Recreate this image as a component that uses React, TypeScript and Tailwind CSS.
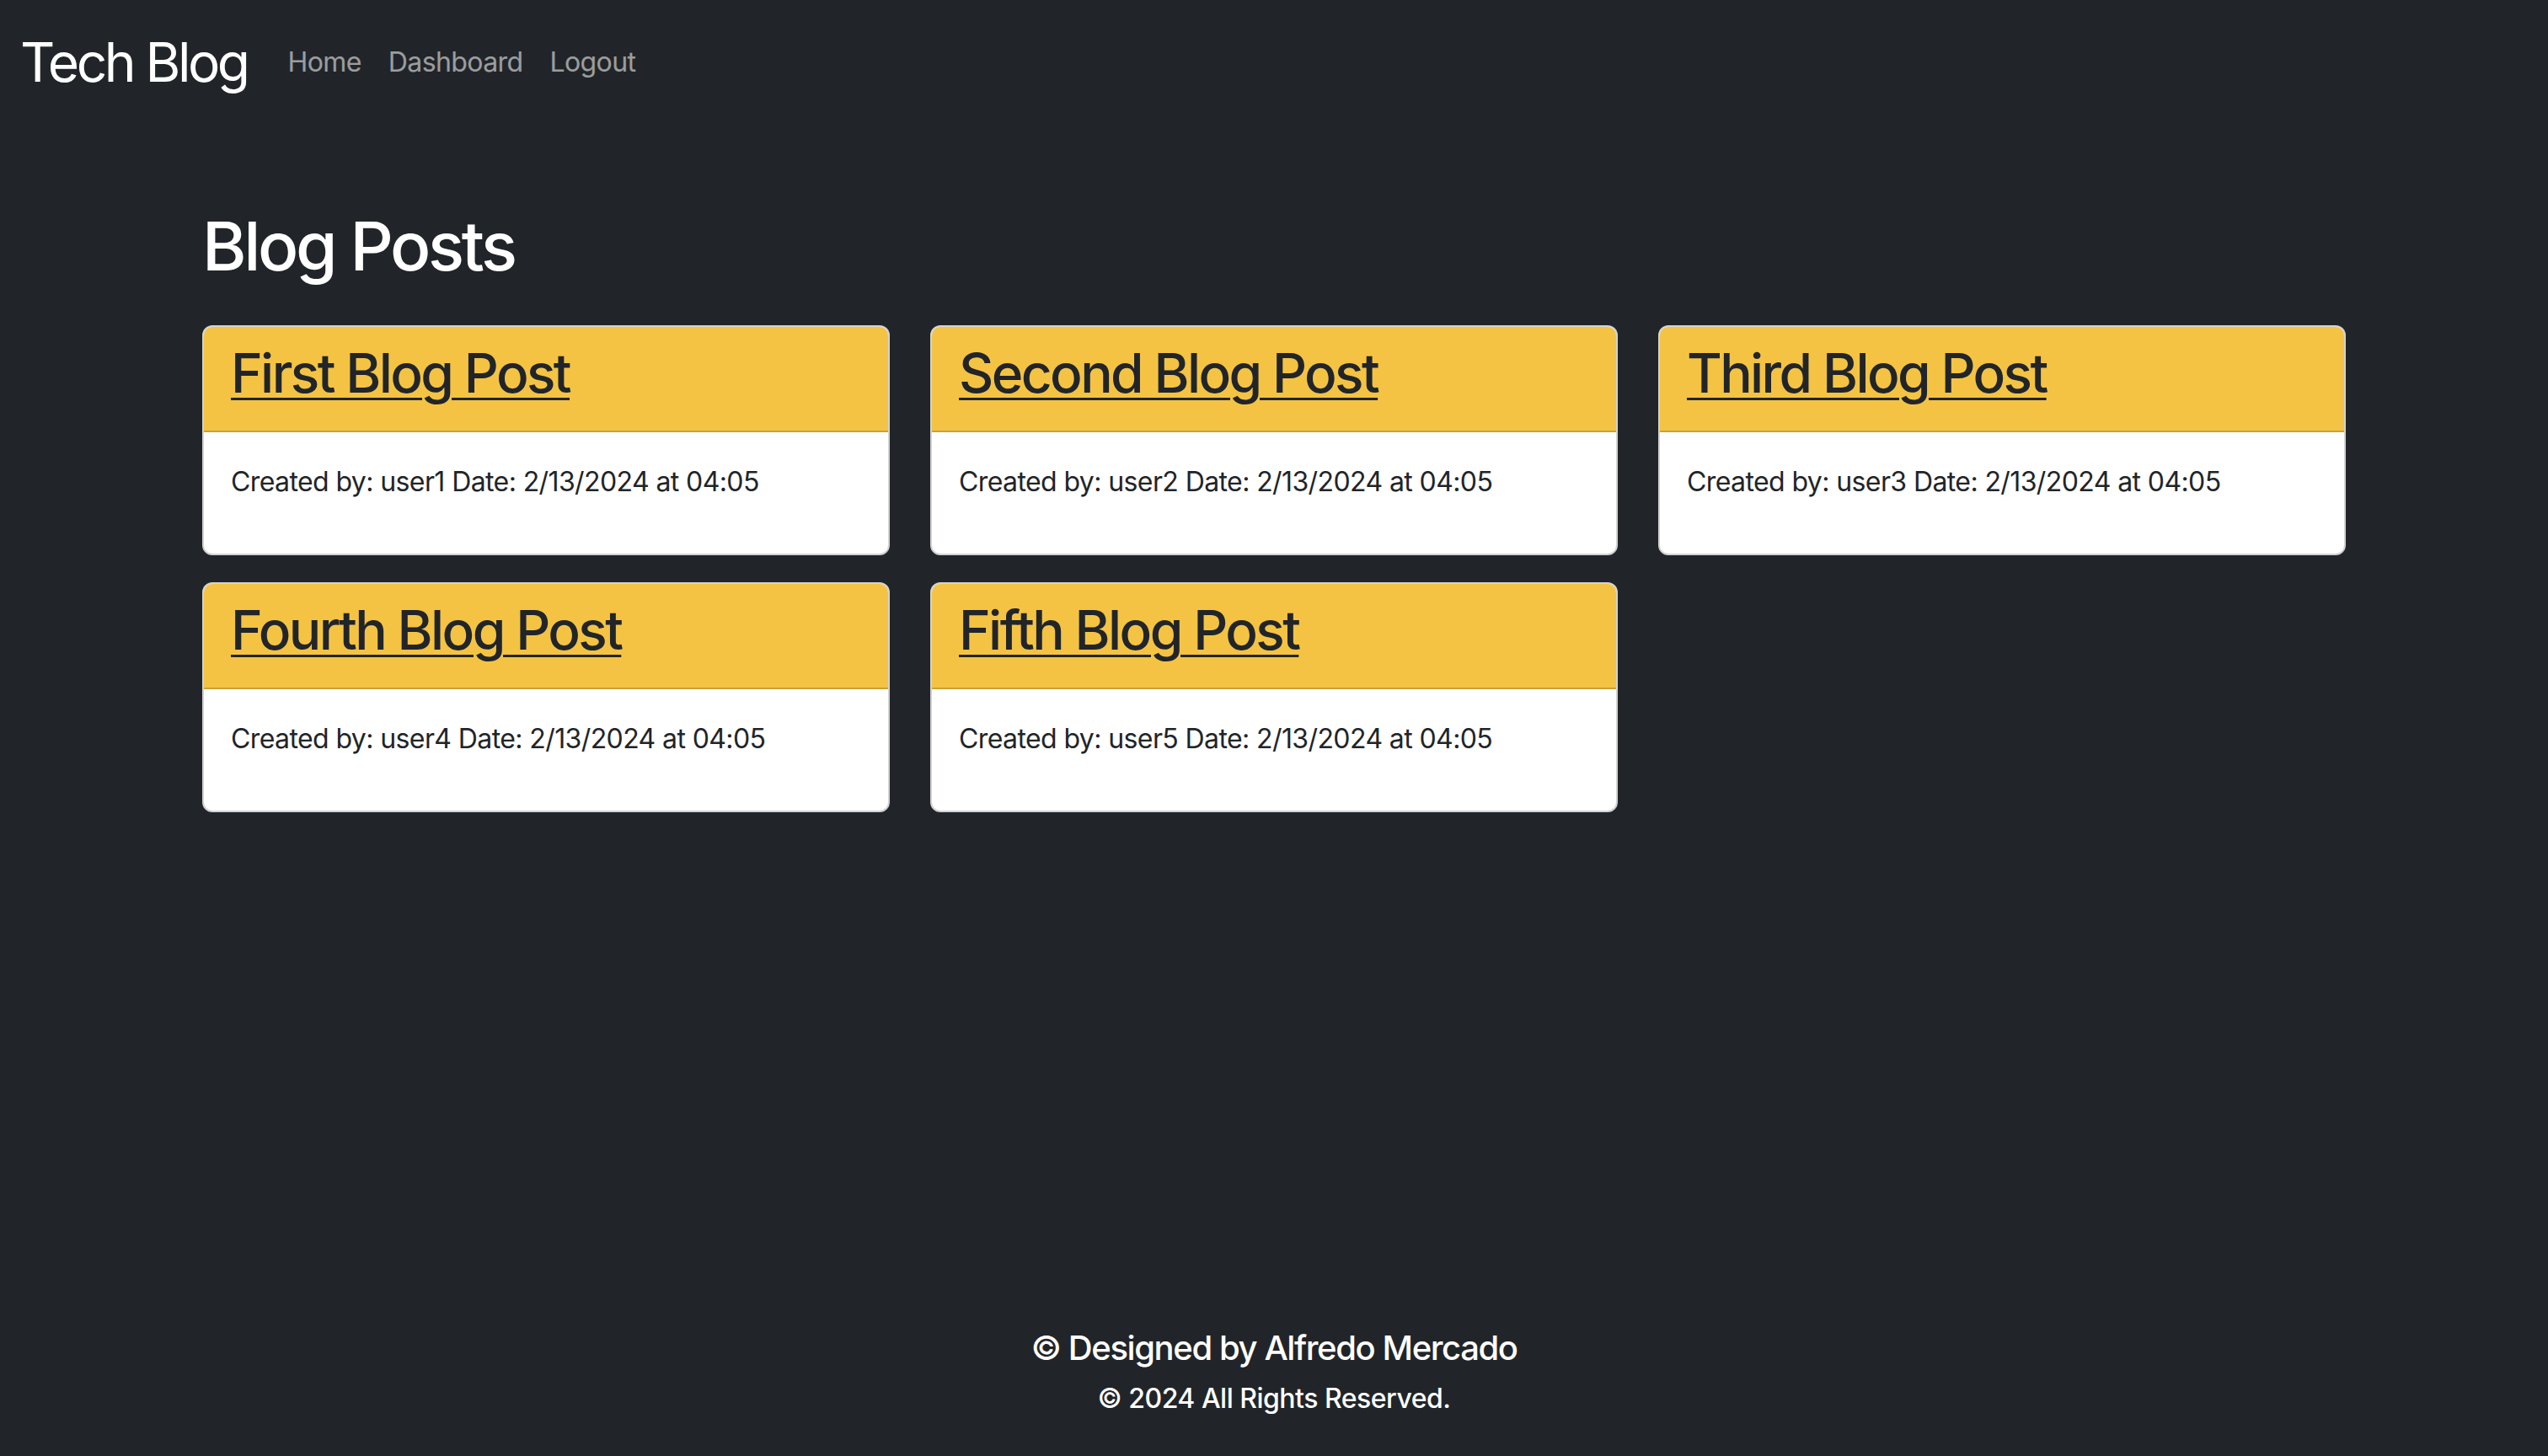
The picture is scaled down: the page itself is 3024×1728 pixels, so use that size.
import React from 'react';

const posts = [
  { title: 'First Blog Post', user: 'user1' },
  { title: 'Second Blog Post', user: 'user2' },
  { title: 'Third Blog Post', user: 'user3' },
  { title: 'Fourth Blog Post', user: 'user4' },
  { title: 'Fifth Blog Post', user: 'user5' },
];

const PostCard = ({ title, user }: { title: string; user: string }) => (
  <div className="bg-white border-2 border-[#d2d2d2] rounded-[12px] overflow-hidden">
    <div className="bg-[#f4c343] border-b-2 border-[#c9a137] px-[32px] py-[16px]">
      <h2 className="text-[64px] leading-[77px] font-medium text-[#212529] mb-[14px] tracking-[-2.6px]">
        <a href="#" className="underline decoration-[3px] underline-offset-[6px]">
          {title}
        </a>
      </h2>
    </div>
    <div className="px-[32px] pt-[35px] pb-[32px]">
      <p className="text-[32px] leading-[48px] text-[#212529] mb-[29px] tracking-[-0.6px]">
        Created by: {user} Date: 2/13/2024 at 04:05
      </p>
    </div>
  </div>
);

const App = () => {
  return (
    <div
      className="min-h-screen bg-[#212529] flex flex-col"
      style={{ fontFamily: "Inter, 'Noto Sans', sans-serif" }}
    >
      {/* Navbar */}
      <nav className="flex items-center px-[24px] py-[16px]">
        <a href="#" className="text-[64px] leading-[96px] text-white py-[10px] mr-[32px] tracking-[-3.5px]">
          Tech Blog
        </a>
        <ul className="flex">
          {['Home', 'Dashboard', 'Logout'].map((link) => (
            <li key={link}>
              <a href="#" className="block px-[16px] py-[16px] text-[32px] leading-[48px] text-white/55 tracking-[-0.6px]">
                {link}
              </a>
            </li>
          ))}
        </ul>
      </nav>

      {/* Main content */}
      <main className="w-[2544px] mx-auto">
        <h1 className="text-[80px] leading-[96px] font-medium text-white mt-[96px] mb-[46px] tracking-[-3.3px]">
          Blog Posts
        </h1>
        <div className="grid grid-cols-3 gap-x-[48px] gap-y-[32px]">
          {posts.map((p) => (
            <PostCard key={p.title} title={p.title} user={p.user} />
          ))}
        </div>
      </main>

      {/* Footer */}
      <footer className="mt-auto text-center text-white pb-[44px]">
        <h5 className="text-[40px] leading-[48px] font-medium mb-[12px] tracking-[-1.4px]">© Designed by Alfredo Mercado</h5>
        <p className="text-[32px] leading-[48px] font-medium tracking-[-0.5px]">© 2024 All Rights Reserved.</p>
      </footer>
    </div>
  );
};

export default App;
